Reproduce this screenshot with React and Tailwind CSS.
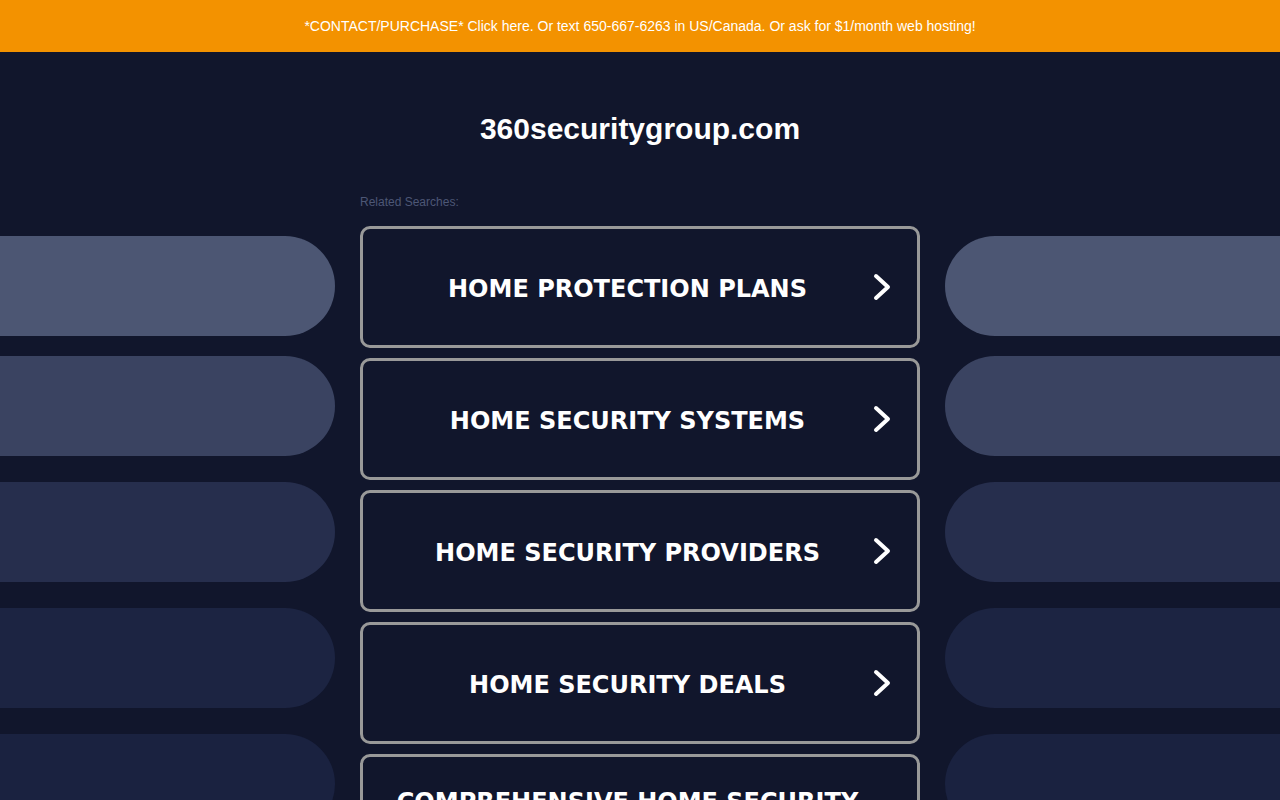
import React from "react";

const searches = [
  "HOME PROTECTION PLANS",
  "HOME SECURITY SYSTEMS",
  "HOME SECURITY PROVIDERS",
  "HOME SECURITY DEALS",
  "COMPREHENSIVE HOME SECURITY SYSTEMS",
];

const pills = [
  { color: "bg-[#4c5673]", gap: "mt-[184px]" },
  { color: "bg-[#3a4361]", gap: "mt-[20px]" },
  { color: "bg-[#262e4d]", gap: "mt-[26px]" },
  { color: "bg-[#1c2442]", gap: "mt-[26px]" },
  { color: "bg-[#1a2240]", gap: "mt-[26px]" },
];

function Chevron() {
  return (
    <svg width="18" height="28" viewBox="0 0 18 28" fill="none">
      <polyline
        points="3,3 15,14 3,25"
        stroke="white"
        strokeWidth="4"
        strokeLinecap="round"
        strokeLinejoin="round"
      />
    </svg>
  );
}

function SideColumn({ side }) {
  return (
    <div className="flex w-[335px] shrink-0 flex-col">
      {pills.map((p, i) => (
        <div
          key={i}
          className={`h-[100px] ${p.gap} ${p.color} ${
            side === "left" ? "rounded-r-full" : "rounded-l-full"
          }`}
        />
      ))}
    </div>
  );
}

export default function App() {
  return (
    <div className="h-screen overflow-hidden bg-[#11162c] font-['Liberation_Sans',Arial,sans-serif]">
      <div className="flex h-[52px] items-center justify-center bg-[#f39200] text-[14px] text-white">
        *CONTACT/PURCHASE* Click here. Or text 650-667-6263 in US/Canada. Or ask for $1/month web hosting!
      </div>

      <div className="flex justify-between">
        <SideColumn side="left" />

        <div className="flex w-[560px] shrink-0 flex-col">
          <h1 className="mt-[60px] text-center text-[30px] leading-[34px] font-bold text-white">
            360securitygroup.com
          </h1>
          <p className="mt-[49px] text-[12px] leading-[14px] text-[#4d5776]">
            Related Searches:
          </p>
          <div className="mt-[17px] flex flex-col gap-[10px]">
            {searches.map((s) => (
              <div
                key={s}
                className="relative flex h-[122px] items-center rounded-[10px] border-[3px] border-[#999999] bg-[#11162c] pl-[12px] pr-[37px]"
              >
                <span className="flex-1 pt-[4px] text-center font-['DejaVu_Sans',Verdana,sans-serif] text-[24px] leading-[29px] font-bold text-white">
                  {s}
                </span>
                <span className="absolute right-[26px] top-1/2 -translate-y-1/2">
                  <Chevron />
                </span>
              </div>
            ))}
          </div>
        </div>

        <SideColumn side="right" />
      </div>
    </div>
  );
}
